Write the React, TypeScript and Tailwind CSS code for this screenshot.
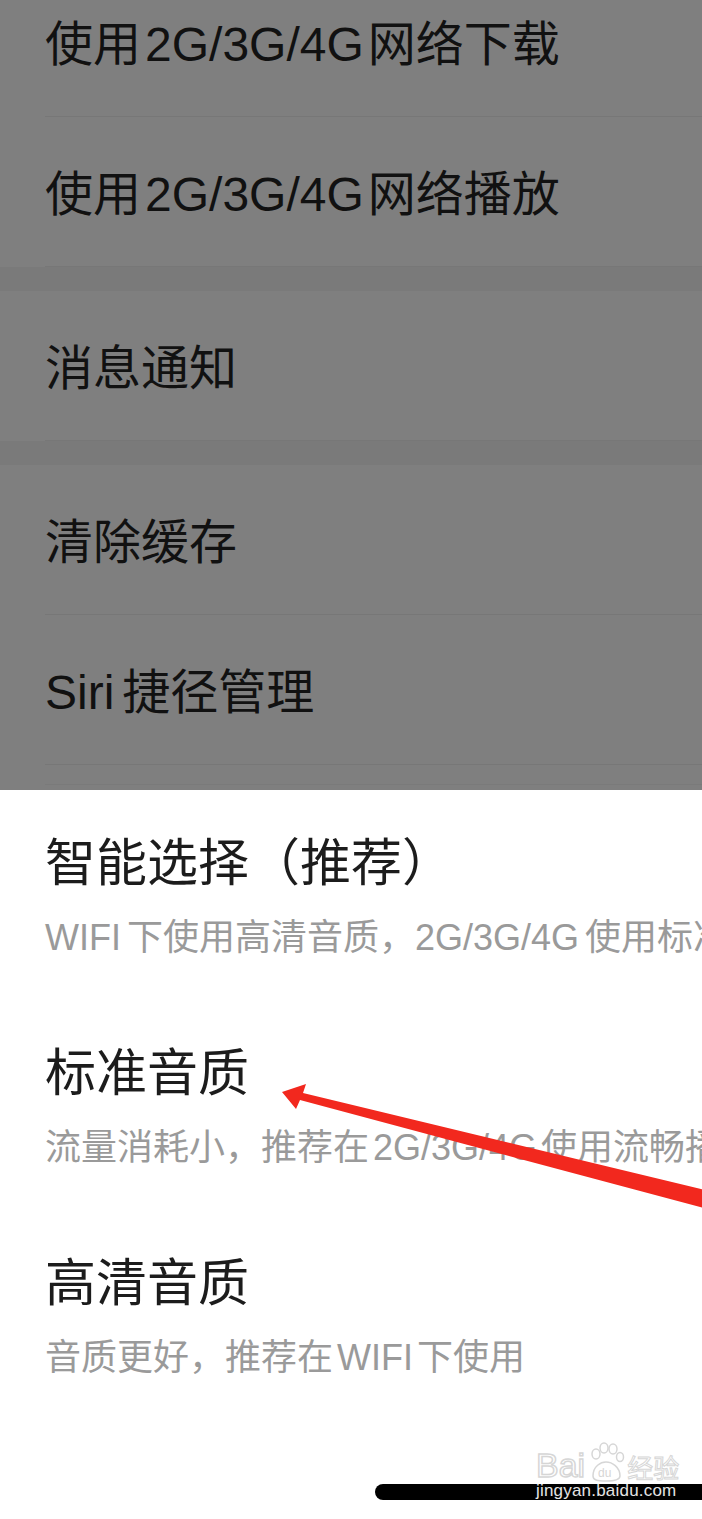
import React from "react";

const L = ({ children }: { children: React.ReactNode }) => (
  <span className="mx-[4px]">{children}</span>
);

const Row = ({ children }: { children: React.ReactNode }) => (
  <div className="ml-[45px] h-[150px] pt-[6px] flex items-center border-b border-[#777777] text-[48px] text-[#111111] whitespace-nowrap">
    {children}
  </div>
);

const Gap = () => <div className="h-[24px] bg-[#7a7a7a]" />;

const Option = ({ title, sub }: { title: React.ReactNode; sub: React.ReactNode }) => (
  <div className="flex flex-col">
    <div className="h-[64px] flex items-center text-[51px] text-[#1c1c1c] whitespace-nowrap">{title}</div>
    <div className="mt-[20px] h-[44px] flex items-center text-[36px] text-[#9a9a9a] whitespace-nowrap">{sub}</div>
  </div>
);

const Arrow = () => (
  <svg
    className="absolute left-0 top-0 pointer-events-none"
    width="702"
    height="1519"
    viewBox="0 0 702 1519"
  >
    <polygon
      fill="#f2281e"
      points="282,1092 306,1084 303,1093 730,1196 726,1214 300,1100 296,1109"
    />
  </svg>
);

const Watermark = () => (
  <div className="absolute left-[536px] top-[1440px] flex flex-col items-start pointer-events-none">
    <div className="flex items-end gap-[2px] h-[42px]">
      <span className="text-[34px] leading-none text-white [-webkit-text-stroke:1.5px_#d6d6d6] font-['Liberation_Sans',sans-serif]">
        Bai
      </span>
      <svg width="38" height="40" viewBox="0 0 38 40">
        <g fill="none" stroke="#d6d6d6" strokeWidth="1.5">
          <ellipse cx="9" cy="12" rx="4" ry="5" />
          <ellipse cx="17" cy="6" rx="4" ry="5" />
          <ellipse cx="26" cy="7" rx="4" ry="5" />
          <ellipse cx="33" cy="15" rx="3.5" ry="4.5" />
          <path d="M6 34 C6 24 14 20 19 20 C25 20 33 25 33 34 C33 38 28 39 19 39 C10 39 6 38 6 34 Z" />
        </g>
        <text x="11" y="35" fontSize="12" fill="#d6d6d6" fontFamily="Liberation Sans, sans-serif">du</text>
      </svg>
      <span className="text-[26px] leading-none text-white [-webkit-text-stroke:1px_#d6d6d6] font-['Noto_Sans_CJK_SC',sans-serif] mb-[2px]">
        经验
      </span>
    </div>
    <div className="text-[17px] leading-[18px] text-[#e4e4e4] font-['Liberation_Sans',sans-serif] tracking-[0.2px]">
      jingyan.baidu.com
    </div>
  </div>
);

export default function App() {
  return (
    <div className="relative w-[702px] h-[1519px] overflow-hidden bg-white font-['Liberation_Sans','Noto_Sans_CJK_SC',sans-serif]">
      <div className="h-[790px] overflow-hidden bg-[#7f7f7f]">
        <div className="-mt-[33px]">
          <Row>
            使用<L>2G/3G/4G</L>网络下载
          </Row>
          <Row>
            使用<L>2G/3G/4G</L>网络播放
          </Row>
          <Gap />
          <Row>消息通知</Row>
          <Gap />
          <Row>清除缓存</Row>
          <Row>
            Siri<span className="ml-[8px]">捷径管理</span>
          </Row>
          <div className="ml-[45px] h-[20px] border-b border-[#7a7a7a]" />
        </div>
      </div>

      <div className="flex flex-col pt-[42px] pl-[45px] gap-[82px]">
        <Option
          title="智能选择（推荐）"
          sub={
            <>
              WIFI<span className="ml-[6px]">下使用高清音质，</span>
              <span className="mr-[6px]">2G/3G/4G</span>使用标准音质
            </>
          }
        />
        <Option
          title="标准音质"
          sub={
            <>
              流量消耗小，推荐在<L>2G/3G/4G</L>使用流畅播放
            </>
          }
        />
        <Option
          title="高清音质"
          sub={
            <>
              音质更好，推荐在<L>WIFI</L>下使用
            </>
          }
        />
      </div>

      <div className="mt-[104px] ml-[375px] h-[16px] rounded-l-full bg-black" />

      <Arrow />
      <Watermark />
    </div>
  );
}
